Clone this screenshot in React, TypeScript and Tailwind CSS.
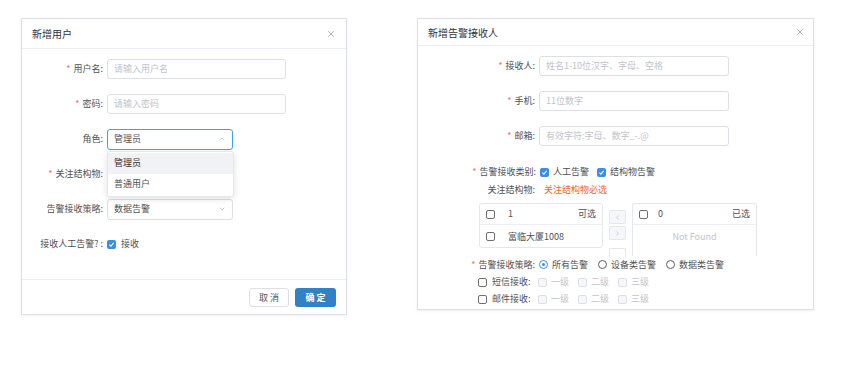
import { ChevronDown, ChevronUp, ChevronLeft, ChevronRight, X } from "lucide-react";

const font = { fontFamily: '"Noto Sans CJK SC", "Noto Sans", sans-serif' };

const Star = () => <span className="mr-[3px] text-[#ef6f5f]">*</span>;

const Checked = () => (
  <span className="flex h-[9px] w-[9px] items-center justify-center rounded-[2px] bg-[#3a8ee6]">
    <svg viewBox="0 0 10 10" className="h-[7px] w-[7px]">
      <path d="M2 5.2 4.2 7.3 8 2.8" fill="none" stroke="white" strokeWidth="1.5" />
    </svg>
  </span>
);

const Box = ({ disabled }: { disabled?: boolean }) => (
  <span
    className={
      disabled
        ? "h-[9px] w-[9px] rounded-[2px] border border-[#dcdfe6] bg-[#f5f7fa]"
        : "h-[9px] w-[9px] rounded-[2px] border border-[#6f6f6f] bg-white"
    }
  />
);

const Radio = ({ on, label }: { on?: boolean; label: string }) => (
  <span className="flex items-center gap-[4px]">
    {on ? (
      <span className="flex h-[9px] w-[9px] items-center justify-center rounded-full border border-[#3a8ee6]">
        <span className="h-[3px] w-[3px] rounded-full bg-[#3a8ee6]" />
      </span>
    ) : (
      <span className="h-[9px] w-[9px] rounded-full border border-[#5f5f5f]" />
    )}
    <span>{label}</span>
  </span>
);

const Input = ({ placeholder, w }: { placeholder: string; w: string }) => (
  <div className={`flex h-[20px] items-center rounded-[3px] border border-[#dcdfe6] px-[6px] text-[#c0c4cc] ${w}`}>
    {placeholder}
  </div>
);

const AddUser = () => (
  <div className="flex h-[297px] w-[326px] flex-col border border-[#dcdfe6] bg-white shadow-[0_1px_3px_rgba(0,0,0,0.06)]">
    <div className="flex h-[30px] items-center justify-between border-b border-[#ebeef5] px-[10px]">
      <span className="text-[10px] text-[#303133]">新增用户</span>
      <X className="h-[10px] w-[10px] text-[#8a8d93]" strokeWidth={1.6} />
    </div>
    <div className="flex flex-1 flex-col pt-[10px] text-[9px] text-[#4f5155]">
      <div className="flex h-[20px] items-center">
        <span className="w-[85px] pr-[4px] text-right">
          <Star />用户名:
        </span>
        <Input placeholder="请输入用户名" w="w-[179px]" />
      </div>
      <div className="mt-[15px] flex h-[20px] items-center">
        <span className="w-[85px] pr-[4px] text-right">
          <Star />密码:
        </span>
        <Input placeholder="请输入密码" w="w-[179px]" />
      </div>
      <div className="relative z-10 mt-[15px] flex h-[20px] items-center">
        <span className="w-[85px] pr-[4px] text-right">角色:</span>
        <div className="relative">
          <div className="flex h-[21px] w-[126px] items-center justify-between rounded-[3px] border border-[#409eff] px-[6px]">
            <span>管理员</span>
            <ChevronUp className="h-[8px] w-[8px] text-[#b0b3b8]" />
          </div>
          <div className="absolute left-0 top-[22px] w-[127px] rounded-[3px] border border-[#e4e7ed] bg-white py-[1px] shadow-[0_2px_6px_rgba(0,0,0,0.12)]">
            <div className="flex h-[21px] items-center bg-[#f0f2f5] px-[6px] text-[#303133]">管理员</div>
            <div className="flex h-[21px] items-center px-[6px]">普通用户</div>
          </div>
        </div>
      </div>
      <div className="mt-[15px] flex h-[20px] items-center">
        <span className="w-[85px] pr-[4px] text-right">
          <Star />关注结构物:
        </span>
      </div>
      <div className="mt-[15px] flex h-[20px] items-center">
        <span className="w-[85px] pr-[4px] text-right">告警接收策略:</span>
        <div className="flex h-[21px] w-[126px] items-center justify-between rounded-[3px] border border-[#dcdfe6] px-[6px]">
          <span>数据告警</span>
          <ChevronDown className="h-[8px] w-[8px] text-[#b0b3b8]" />
        </div>
      </div>
      <div className="mt-[15px] flex h-[20px] items-center">
        <span className="w-[85px] pr-[4px] text-right">接收人工告警? :</span>
        <span className="flex items-center gap-[5px]">
          <Checked />
          <span>接收</span>
        </span>
      </div>
    </div>
    <div className="flex h-[35px] items-start justify-end gap-[6px] border-t border-[#ebeef5] px-[10px] pt-[8px] text-[9px]">
      <button className="h-[19px] w-[40px] rounded-[3px] border border-[#dcdfe6] bg-white text-[#555]">取 消</button>
      <button className="h-[19px] w-[41px] rounded-[3px] bg-[#3181c6] font-semibold text-white">确 定</button>
    </div>
  </div>
);

const AddReceiver = () => (
  <div className="flex h-[292px] w-[397px] flex-col border border-[#dcdfe6] bg-white shadow-[0_1px_3px_rgba(0,0,0,0.06)]">
    <div className="flex h-[27px] items-center justify-between border-b border-[#ebeef5] pl-[10px] pr-[8px]">
      <span className="text-[10px] text-[#303133]">新增告警接收人</span>
      <X className="h-[10px] w-[10px] text-[#8a8d93]" strokeWidth={1.6} />
    </div>
    <div className="flex flex-col pt-[10px] text-[9px] text-[#4f5155]">
      <div className="flex h-[20px] items-center">
        <span className="w-[121px] pr-[4px] text-right">
          <Star />接收人:
        </span>
        <Input placeholder="姓名1-10位汉字、字母、空格" w="w-[190px]" />
      </div>
      <div className="mt-[15px] flex h-[20px] items-center">
        <span className="w-[121px] pr-[4px] text-right">
          <Star />手机:
        </span>
        <Input placeholder="11位数字" w="w-[190px]" />
      </div>
      <div className="mt-[15px] flex h-[20px] items-center">
        <span className="w-[121px] pr-[4px] text-right">
          <Star />邮箱:
        </span>
        <Input placeholder="有效字符:字母、数字_-.@" w="w-[190px]" />
      </div>
      <div className="mt-[16px] flex h-[20px] items-center">
        <span className="w-[122px] pr-[4px] text-right">
          <Star />告警接收类别:
        </span>
        <span className="flex items-center gap-[4px]">
          <Checked />
          <span>人工告警</span>
        </span>
        <span className="ml-[8px] flex items-center gap-[4px]">
          <Checked />
          <span>结构物告警</span>
        </span>
      </div>
      <div className="mt-[1px] flex h-[14px] items-center">
        <span className="w-[126px] pr-[9px] text-right">关注结构物:</span>
        <span className="text-[#f0642d]">关注结构物必选</span>
      </div>
      <div className="mt-[6px] flex items-start pl-[61px]">
        <div className="h-[45px] w-[124px] rounded-[3px] border border-[#e4e7ed]">
          <div className="flex h-[21px] items-center justify-between border-b border-[#ebeef5] px-[6px]">
            <span className="flex items-center gap-[13px]">
              <Box />
              <span>1</span>
            </span>
            <span>可选</span>
          </div>
          <div className="flex h-[23px] items-center gap-[13px] px-[6px]">
            <Box />
            <span>富临大厦1008</span>
          </div>
        </div>
        <div className="mx-[6px] flex w-[17px] flex-col pt-[7px]">
          <div className="flex h-[14px] items-center justify-center rounded-[2px] border border-[#e4e7ed] bg-[#f5f7fa]">
            <ChevronLeft className="h-[7px] w-[7px] text-[#b0b3b8]" />
          </div>
          <div className="mt-[2px] flex h-[14px] items-center justify-center rounded-[2px] border border-[#e4e7ed] bg-[#f5f7fa]">
            <ChevronRight className="h-[7px] w-[7px] text-[#b0b3b8]" />
          </div>
          <div className="mt-[8px] h-[9px] rounded-t-[2px] border border-b-0 border-[#e4e7ed]" />
        </div>
        <div className="h-[53px] w-[125px] rounded-t-[3px] border border-b-0 border-[#e4e7ed]">
          <div className="flex h-[21px] items-center justify-between border-b border-[#ebeef5] px-[6px]">
            <span className="flex items-center gap-[10px]">
              <Box />
              <span>0</span>
            </span>
            <span>已选</span>
          </div>
          <div className="flex h-[23px] items-center justify-center text-[#c0c4cc]">Not Found</div>
        </div>
      </div>
      <div className="flex h-[15px] items-center">
        <span className="w-[121px] pr-[4px] text-right">
          <Star />告警接收策略:
        </span>
        <span className="flex items-center gap-[10px]">
          <Radio on label="所有告警" />
          <Radio label="设备类告警" />
          <Radio label="数据类告警" />
        </span>
      </div>
      {["短信接收:", "邮件接收:"].map((name, i) => (
        <div key={name} className={`flex h-[16px] items-center pl-[60px] ${i === 0 ? "mt-[2px]" : "mt-[1px]"}`}>
          <span className="flex w-[60px] items-center gap-[5px]">
            <Box />
            <span>{name}</span>
          </span>
          {["一级", "二级", "三级"].map((lv) => (
            <span key={lv} className="flex w-[40px] items-center gap-[4px] text-[#c0c4cc]">
              <Box disabled />
              <span>{lv}</span>
            </span>
          ))}
        </div>
      ))}
    </div>
  </div>
);

export default function App() {
  return (
    <div className="h-[374px] w-[842px] bg-white" style={font}>
      <div className="flex items-start gap-[70px] pl-[21px] pt-[18px]">
        <AddUser />
        <AddReceiver />
      </div>
    </div>
  );
}
